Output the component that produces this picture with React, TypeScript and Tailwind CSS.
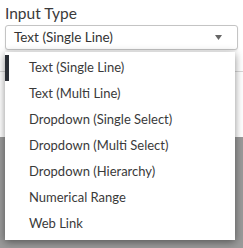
import React from 'react';

const options = [
    'Text (Single Line)',
    'Text (Multi Line)',
    'Dropdown (Single Select)',
    'Dropdown (Multi Select)',
    'Dropdown (Hierarchy)',
    'Numerical Range',
    'Web Link',
];

const App: React.FC = () => {
    return (
        <div className="relative w-[243px] h-[248px] overflow-hidden bg-white font-['Lato',sans-serif] text-[#333]">
            {/* Page behind the menu */}
            <div className="flex flex-col h-full">
                <div className="h-[72px] border-b border-[#d8d8d8]"></div>
                <div className="h-[65px] bg-white"></div>
                <div className="flex-1 bg-[#9a9a9a]"></div>
            </div>

            {/* Field */}
            <div className="absolute top-0 left-0 w-full px-[5px] pt-[3px]">
                <label className="block text-[15.5px] leading-[20px] text-[#3a3a3a]">Input Type</label>
                <div className="mt-[2px] h-[25px] flex items-center justify-between rounded-[3px] border border-[#c4c4c4] bg-white pl-[8px] pr-[15px] shadow-[0_1px_2px_rgba(0,0,0,0.08)]">
                    <span className="text-[13.5px] text-[#333]">Text (Single Line)</span>
                    <svg width="7" height="5" viewBox="0 0 7 5">
                        <path d="M0 0 H7 L3.5 5 Z" fill="#666" />
                    </svg>
                </div>
            </div>

            {/* Dropdown menu */}
            <div className="absolute left-[5px] top-[52px] w-[230px] bg-white py-[3px] shadow-[0_2px_8px_rgba(0,0,0,0.45)]">
                {options.map((opt, i) => (
                    <div
                        key={opt}
                        className={
                            i === 0
                                ? 'h-[26px] flex items-center pl-[20px] border-l-4 border-[#2a2e35] text-[13px] text-[#3a3a3a]'
                                : 'h-[26px] flex items-center pl-[24px] text-[13px] text-[#3a3a3a]'
                        }
                    >
                        {opt}
                    </div>
                ))}
            </div>
        </div>
    );
};

export default App;
